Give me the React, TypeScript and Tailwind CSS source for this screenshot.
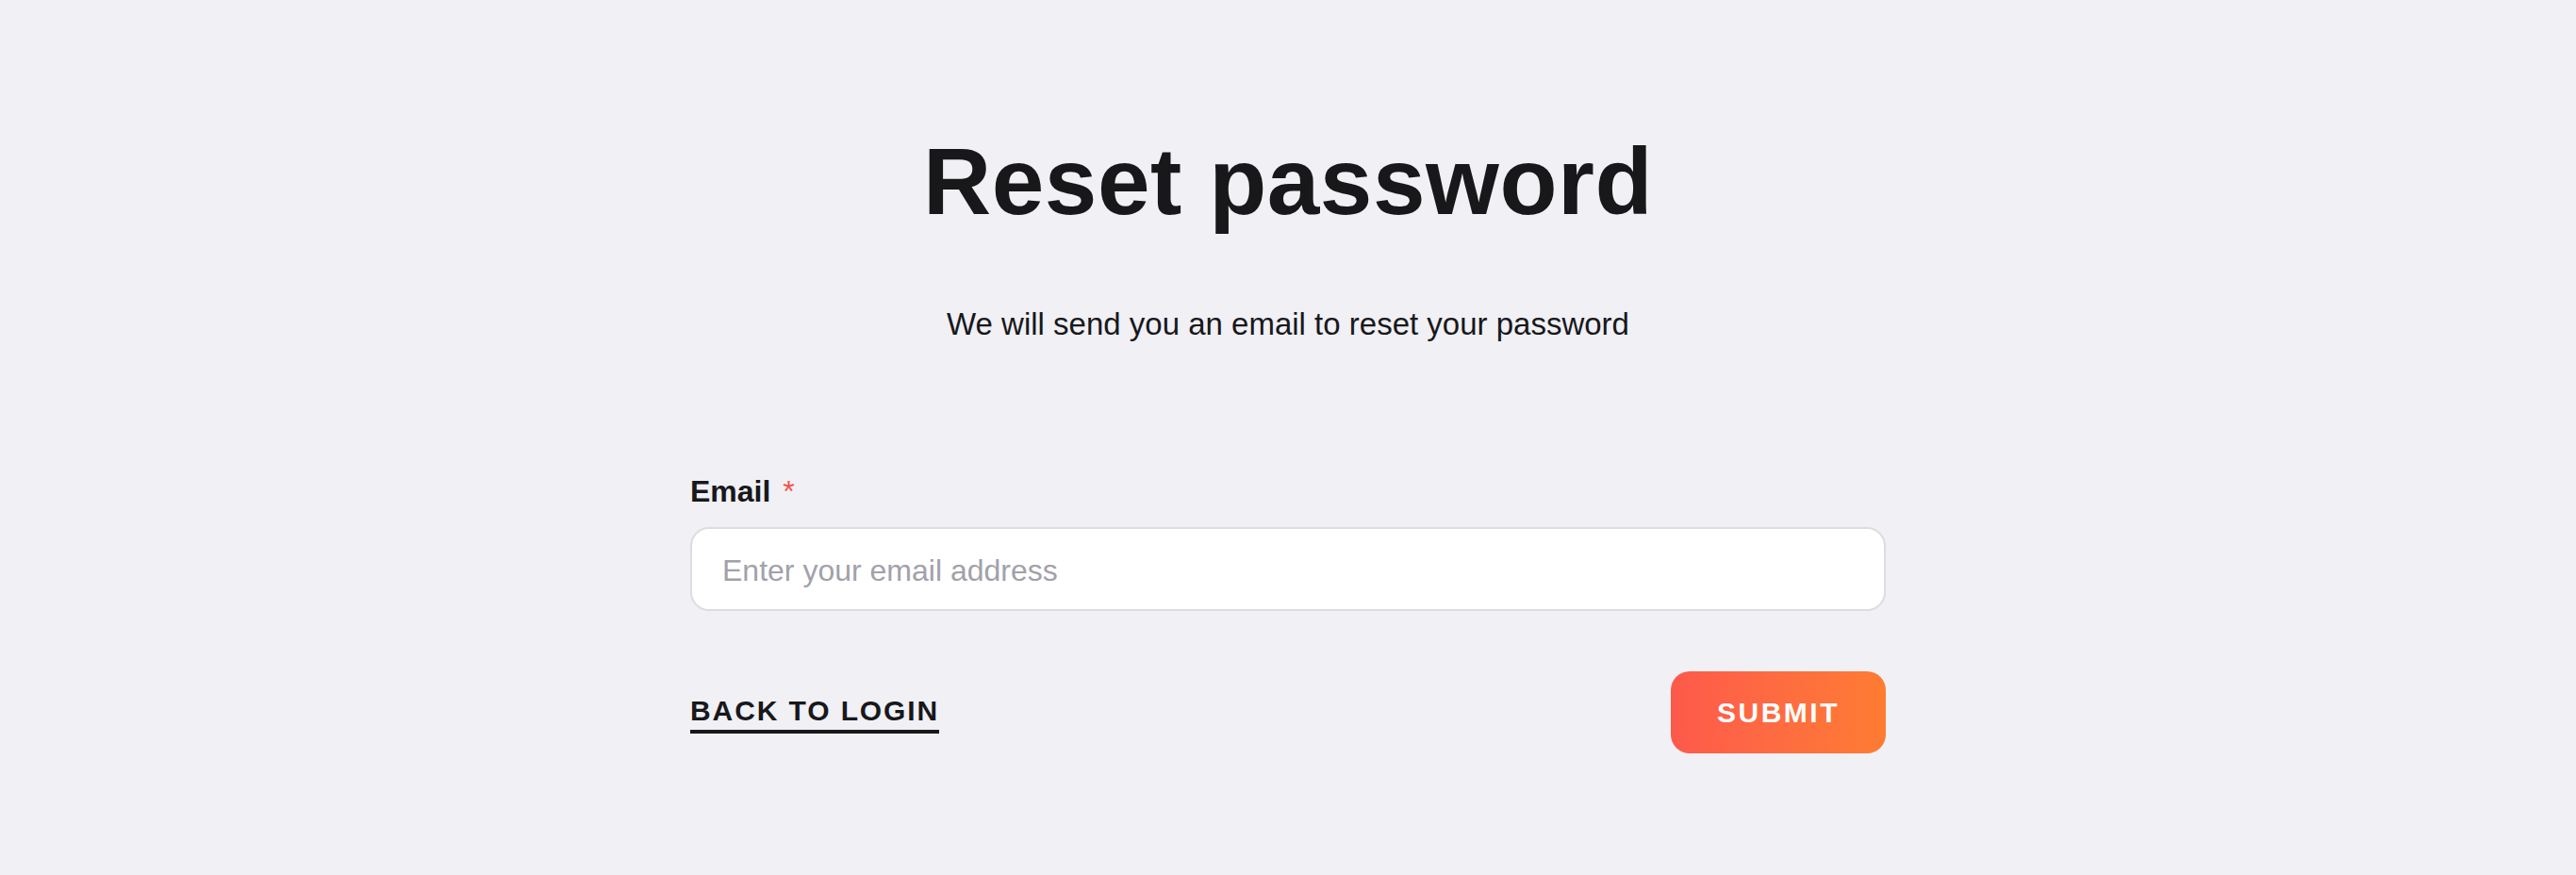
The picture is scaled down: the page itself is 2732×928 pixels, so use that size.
import React, { useState } from "react";

// Reset password page, laid out for a 2x canvas
const App: React.FC = () => {
  const [email, setEmail] = useState("");

  const handleSubmit = (e: React.FormEvent<HTMLFormElement>) => {
    e.preventDefault();
  };

  return (
    <div
      className="min-h-[928px] w-full bg-[#f0f0f5] text-[#18181b]"
      style={{ fontFamily: '"Liberation Sans", Arial, sans-serif' }}
    >
      <div className="mx-auto flex w-[1268px] flex-col items-center pt-[142px]">
        <h1 className="text-[100px] font-bold leading-none tracking-[0.5px]">
          Reset password
        </h1>
        <p className="mt-[78px] text-[33px] leading-[48px]">
          We will send you an email to reset your password
        </p>

        <form onSubmit={handleSubmit} className="mt-[129px] flex w-full flex-col">
          <label htmlFor="email" className="text-[32px] font-bold leading-[48px]">
            Email <span className="ml-[4px] font-normal text-[#f0524a]">*</span>
          </label>
          <input
            id="email"
            type="email"
            value={email}
            onChange={(e) => setEmail(e.target.value)}
            placeholder="Enter your email address"
            className="mt-[14px] h-[89px] w-full rounded-[20px] border-2 border-[#dcdce1] bg-white px-[32px] pt-[3px] text-[32px] outline-none placeholder:text-[#a1a1aa]"
          />

          <div className="mt-[64px] flex items-center justify-between">
            <a
              href="#"
              className="mt-[5px] inline-block border-b-4 border-[#18181b] pb-[5px] text-[30px] font-bold leading-none tracking-[1.9px]"
            >
              BACK TO LOGIN
            </a>
            <button
              type="submit"
              className="h-[87px] w-[228px] rounded-[20px] bg-gradient-to-r from-[#fd594b] to-[#fe7c32] text-[30px] font-bold tracking-[2.5px] text-white"
            >
              SUBMIT
            </button>
          </div>
        </form>
      </div>
    </div>
  );
};

export default App;
